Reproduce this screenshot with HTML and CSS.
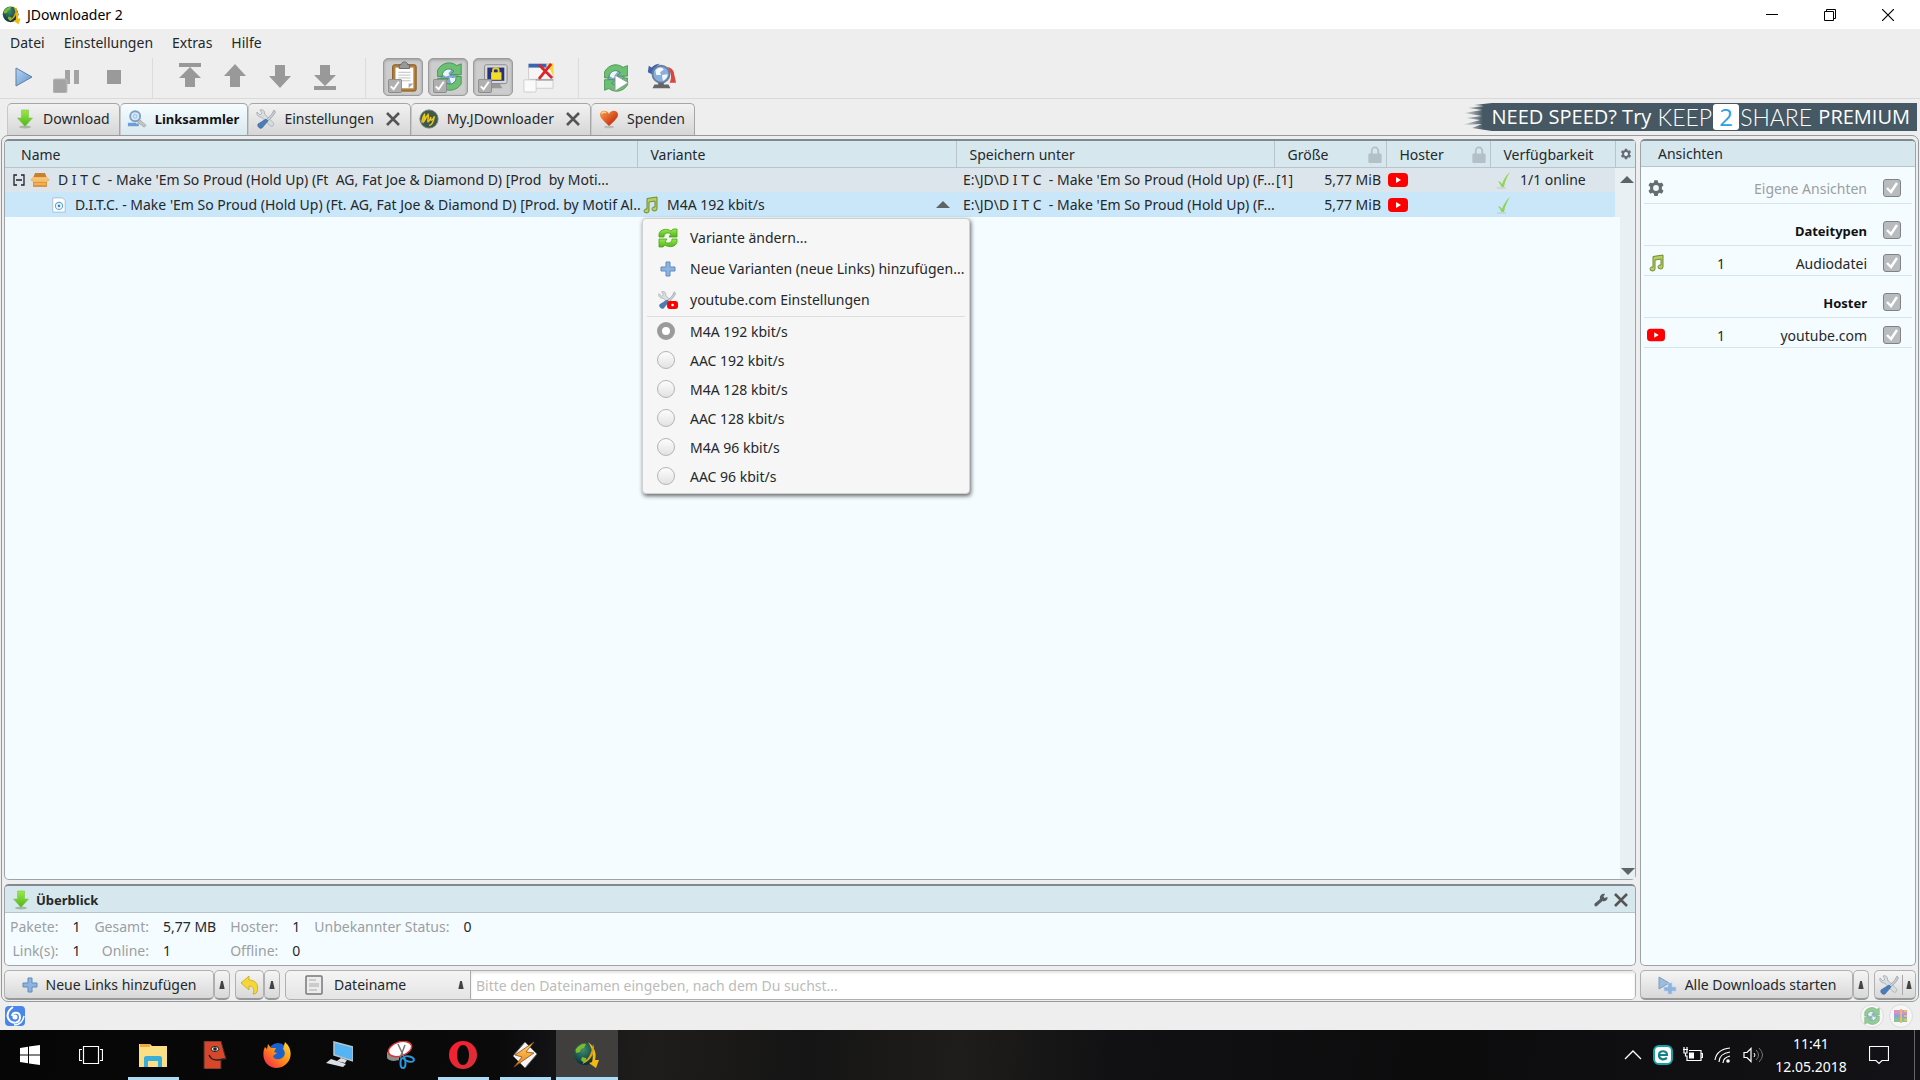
FILE: index.html
```
<!DOCTYPE html>
<html lang="de">
<head>
    <meta charset="UTF-8">
    <meta name="viewport" content="width=device-width, initial-scale=1.0">
    <title>JDownloader 2</title>
    <link rel="stylesheet" href="styles.css">
</head>
<body>
    <svg class="sprite" aria-hidden="true">
        <defs>
            <linearGradient id="gGreen" x1="0" y1="0" x2="0" y2="1"><stop offset="0" stop-color="#9be84a"/><stop offset="1" stop-color="#4fb51c"/></linearGradient>
            <linearGradient id="gBlue" x1="0" y1="0" x2="1" y2="1"><stop offset="0" stop-color="#b8d4f0"/><stop offset="1" stop-color="#5e93cf"/></linearGradient>
            <linearGradient id="gHeart" x1="0" y1="0" x2="1" y2="1"><stop offset="0" stop-color="#ffa14a"/><stop offset="1" stop-color="#b81400"/></linearGradient>
            <linearGradient id="gOpera" x1="0" y1="0" x2="1" y2="1"><stop offset="0" stop-color="#ff1b2d"/><stop offset="1" stop-color="#d3323a"/></linearGradient>
            <linearGradient id="gFox" x1="1" y1="0" x2="0" y2="1"><stop offset="0" stop-color="#ffdf2e"/><stop offset="0.5" stop-color="#ff8a16"/><stop offset="1" stop-color="#f0185a"/></linearGradient>
            <radialGradient id="gGlobe" cx="0.4" cy="0.3" r="0.7"><stop offset="0" stop-color="#3d8f6e"/><stop offset="1" stop-color="#07293a"/></radialGradient>
            <linearGradient id="gBolt" x1="0" y1="0" x2="0" y2="1"><stop offset="0" stop-color="#ffd76a"/><stop offset="1" stop-color="#f07a10"/></linearGradient>
            <linearGradient id="gBrush" x1="0" y1="0" x2="1" y2="0"><stop offset="0" stop-color="#455863" stop-opacity="0"/><stop offset="0.7" stop-color="#455863"/></linearGradient>
        </defs>
        <symbol id="jd" viewBox="0 0 28 28">
            <circle cx="12" cy="13" r="11" fill="url(#gGlobe)"/>
            <path d="M3 8c3-4 7-6 10-5l-2 4-3 1-1 3-4 1c0-2-1-3 0-4zM9 16l4 1 1 3-3 2-3-3z" fill="#7dbb2c"/>
            <path d="M15 1c7 5 9 12 7 18h4l-3 8-7-5 3-1c2-7 0-14-4-20z" fill="#f2b90f"/>
            <path d="M20 3c3 6-1 17-11 20 7-5 10-12 11-20z" fill="#e0a010"/>
        </symbol>
        <symbol id="down" viewBox="0 0 20 20">
            <ellipse cx="10" cy="18" rx="6" ry="1.500" fill="#aab5aa"/>
            <path d="M6.500 1h7v8h4L10 17.500 2.500 9h4z" fill="url(#gGreen)" stroke="#7bc94a" stroke-width=".6"/>
        </symbol>
        <symbol id="linkgrab" viewBox="0 0 22 20">
            <path d="M1 14h9v4H1zM8 15h5v3H8z" fill="#6d9dd4"/>
            <path d="M13 10l8 7-2 2-8-6z" fill="#c4c4c4" stroke="#888" stroke-width=".6"/>
            <circle cx="9" cy="7" r="5.500" fill="#d6e8f8" stroke="#7e9fc4" stroke-width="2"/>
            <circle cx="9" cy="7" r="2" fill="none" stroke="#93b7dc"/>
        </symbol>
        <symbol id="tools" viewBox="0 0 20 20">
            <path d="M1 3l3 3 2-2-2-3c3-1 5 1 4.500 4l9 9c1 2-1 4-3 3l-9-9C3 8.500 0 6 1 3z" fill="#d8dde0" stroke="#9aa2a8" stroke-width=".7"/>
            <path d="M18 1l1.500 2L17 7l-5 5-1.500-1.500 5-5z" fill="#c5ccd2" stroke="#8d969e" stroke-width=".6"/>
            <path d="M10 10l2 2-6 7c-2 1-5-1-4-4z" fill="#4b7db8" stroke="#345f94" stroke-width=".6"/>
        </symbol>
        <symbol id="cross" viewBox="0 0 16 16"><path d="M2 2l12 12M14 2L2 14" stroke="#555" stroke-width="2.600"/></symbol>
        <symbol id="my" viewBox="0 0 22 22">
            <circle cx="11" cy="11" r="10" fill="#3d5a4a" stroke="#6d7a6a"/>
            <path d="M3 15C4 11 4 8 6 6c1 3-1 6-1 8 2-2 3-6 5-8 1 3-1 6 0 8 2-1 2-3 3-5-1 5 2 4 4-1-1 5-3 10-6 10" fill="none" stroke="#f0c81a" stroke-width="1.600"/>
        </symbol>
        <symbol id="heart" viewBox="0 0 20 20">
            <ellipse cx="10" cy="18" rx="5" ry="1.300" fill="#bbb"/>
            <path d="M10 17C4 11 1 9 1 5.500 1 1 8 0 10 5c2-5 9-4 9 .500C19 9 16 11 10 17z" fill="url(#gHeart)"/>
            <path d="M3 5c0-2 3-2.500 4-1" stroke="#ffd9a8" fill="none" stroke-width="1.200"/>
        </symbol>
        <symbol id="gear" viewBox="0 0 16 16">
            <path d="M6.500 1h3l.4 2 1.300.8 2-.8 1.500 2.600L13.200 7v2l1.500 1.400-1.500 2.600-2-.8-1.300.8-.4 2h-3l-.4-2-1.300-.8-2 .8L1.300 10.400 2.800 9V7L1.300 5.600 2.800 3l2 .8L6.100 3z" fill="#666d72"/>
            <circle cx="8" cy="8" r="2.600" fill="#eff7fa"/>
        </symbol>
        <symbol id="lock" viewBox="0 0 14 18"><path d="M3.500 9V5.500a3.500 4 0 0 1 7 0V9" fill="none" stroke="#b3c0c8" stroke-width="2"/><rect x="0" y="8" width="14" height="10" rx="1" fill="#b3c0c8"/></symbol>
        <symbol id="yt" viewBox="0 0 20 16"><rect x="0" y="1" width="20" height="14" rx="4" fill="#f00"/><path d="M8 5l5 3-5 3z" fill="#fff"/></symbol>
        <symbol id="check" viewBox="0 0 16 18"><path d="M2 10l2.500 1L6 13C7.500 9 10 4 14 1c-3 5-5 9-6 15H5.500C4.500 14 3.500 12 2 10z" fill="#8fd45c"/><path d="M1 17h9" stroke="#b9ccc0"/></symbol>
        <symbol id="note" viewBox="0 0 18 18"><path d="M6 2.500L16 1v12a2.500 2 0 1 1-2-2V5L8 6v9a2.500 2 0 1 1-2-2z" fill="#b5cf63" stroke="#738a30" stroke-width="1"/></symbol>
        <symbol id="box" viewBox="0 0 20 16"><path d="M3 6h14v9H3z" fill="#e0953a"/><path d="M3 6l2-5h10l2 5z" fill="#c8822f"/><path d="M3 5h14l3 3-3 2H3L0 8z" fill="#f4bb68"/><path d="M3 7h14M4 12h12" stroke="#f7cc8c"/></symbol>
        <symbol id="file" viewBox="0 0 16 18"><path d="M1 1h11l3 3v13H1z" fill="#fdfeff" stroke="#a9bccb"/><circle cx="8" cy="10" r="4" fill="none" stroke="#5aa5dd" stroke-width="1.300"/><circle cx="8" cy="10" r="1.500" fill="#2f86cc"/></symbol>
        <symbol id="refresh" viewBox="0 0 20 20">
            <path d="M1 9V6c1-5 8-6 12-3l2-2 4 0v8h-8l2-3C10 4 6 5 6 9z" fill="url(#gGreen)" stroke="#48a31c" stroke-width=".8"/>
            <path d="M19 11v3c-1 5-8 6-12 3l-2 2H1v-8h8l-2 3c3 2 7 1 7-3z" fill="url(#gGreen)" stroke="#48a31c" stroke-width=".8"/>
        </symbol>
        <symbol id="plus" viewBox="0 0 16 16"><path d="M6 1h4v5h5v4h-5v5H6v-5H1V6h5z" fill="#8db4e0" stroke="#5f8bbd" stroke-width="1"/></symbol>
        <symbol id="ytset" viewBox="0 0 22 20"><use href="#tools" width="20" height="20"/><rect x="10" y="11" width="12" height="9" rx="3" fill="#f00"/><circle cx="16" cy="15.500" r="1.500" fill="#fff"/></symbol>
        <symbol id="globe" viewBox="0 0 32 32">
            <circle cx="16" cy="16" r="10" fill="#7fa6d4"/>
            <path d="M9 11c3-4 7-4 9-2l-3 3 1 3-4 1-3-2zM16 17l5 1 3-3c0 4-3 8-6 9z" fill="#edf5fc"/>
            <path d="M3 16V9C8 0 18-1 24 4l5-2v12H17l4-4c-5-4-10-2-12 2-1 1-1 2-1 4z" fill="#6cbf74" stroke="#35893f" stroke-width=".8"/>
            <path d="M29 16v8c-5 8-15 9-21 4l-5 2V18h12l-4 4c5 4 10 2 12-2v-4z" fill="#6cbf74" stroke="#35893f" stroke-width=".8"/>
        </symbol>
        <symbol id="tick" viewBox="0 0 15 15"><rect x=".5" y=".5" width="14" height="14" rx="1.500" fill="#b0b0b0" stroke="#888"/><path d="M3 8l3 3 5.500-8" fill="none" stroke="#fff" stroke-width="2"/></symbol>
        <symbol id="wrench" viewBox="0 0 14 14"><path d="M1 13c-1.500-1.500 0-3 1-3.500L6 6C5 3 8 0 11 1L9.500 3.500l1 1.500L13.500 4C14 7 11 9 8.500 8L4 12c-1 1.500-2 2-3 1z" fill="#555d61"/></symbol>
        <symbol id="up" viewBox="0 0 14 7"><path d="M0 7l7-7 7 7z" fill="#5d6366"/></symbol>
        <symbol id="spin" viewBox="0 0 6 9"><path d="M0 9l2-9h2l2 9z" fill="#444"/></symbol>
    </svg>

    <header class="titlebar">
        <svg class="i20"><use href="#jd"/></svg>
        <span class="title">JDownloader 2</span>
        <button class="winbtn" aria-label="Minimieren"><svg class="i12" viewBox="0 0 12 12"><path d="M0 5.500h12" stroke="#000"/></svg></button>
        <button class="winbtn" aria-label="Wiederherstellen"><svg class="i12" viewBox="0 0 12 12"><path d="M.5 2.500h9v9h-9zM2.500 2.500v-2h9v9h-2" fill="none" stroke="#000"/></svg></button>
        <button class="winbtn" aria-label="Schließen"><svg class="i12" viewBox="0 0 12 12"><path d="M0 0l12 12M12 0L0 12" stroke="#000" stroke-width="1.200"/></svg></button>
    </header>

    <nav class="menubar">
        <button>Datei</button><button>Einstellungen</button><button>Extras</button><button>Hilfe</button>
    </nav>

    <div class="toolbar">
        <div class="group">
            <button class="tool" aria-label="Start"><svg viewBox="0 0 32 32"><path d="M8 7l16 9-16 9z" fill="url(#gBlue)" stroke="#5e7fa6"/></svg></button>
            <button class="tool" aria-label="Pause"><svg viewBox="0 0 32 32"><g fill="#a3a3a3"><path d="M12 9h5v14h-5zM21 9h5v14h-5z"/><rect x="0" y="18" width="14" height="14" rx="2" stroke="#bbb"/></g></svg></button>
            <button class="tool" aria-label="Stop"><svg viewBox="0 0 32 32"><path d="M9 9h14v14H9z" fill="#9a9a9a"/></svg></button>
        </div>
        <div class="group">
            <button class="tool" aria-label="Ganz nach oben"><svg viewBox="0 0 32 32"><path d="M5 2h22v4H5zM16 6l11 11h-6v9H11v-9H5z" fill="#999"/></svg></button>
            <button class="tool" aria-label="Nach oben"><svg viewBox="0 0 32 32"><path d="M16 3l11 12h-6v11H11V15H5z" fill="#999"/></svg></button>
            <button class="tool" aria-label="Nach unten"><svg viewBox="0 0 32 32"><path d="M16 27l11-12h-6V4H11v11H5z" fill="#999"/></svg></button>
            <button class="tool" aria-label="Ganz nach unten"><svg viewBox="0 0 32 32"><path d="M16 25l11-11h-6V4H11v10H5zM5 25h22v4H5z" fill="#999"/></svg></button>
        </div>
        <div class="group">
            <button class="tool pressed" aria-pressed="true" aria-label="Zwischenablage"><svg viewBox="0 0 34 34"><rect x="6" y="4" width="25" height="28" rx="2" fill="#b5803a" stroke="#7d5423"/><path d="M9 7h19v22H9z" fill="#fff"/><path d="M12 12h13M12 15h13M12 18h13M12 21h13" stroke="#bbb"/><path d="M23 29v-5h5z" fill="#aaa"/><path d="M13 4h2c0-4 7-4 7 0h2v4H13z" fill="#999" stroke="#666"/><use href="#tick" x="1" y="19" width="15" height="15"/></svg></button>
            <button class="tool pressed" aria-pressed="true" aria-label="Automatisch aktualisieren"><svg viewBox="0 0 34 34"><use href="#globe" x="3" y="1" width="31" height="31"/><use href="#tick" x="1" y="19" width="15" height="15"/></svg></button>
            <button class="tool pressed" aria-pressed="true" aria-label="Ruhezustand verhindern"><svg viewBox="0 0 34 34"><path d="M14 24h10l3 5H12z" fill="#999"/><rect x="8" y="4" width="24" height="20" rx="2" fill="#d8d8d8" stroke="#888"/><path d="M11 7h18v14H11z" fill="#26337c"/><path d="M17 13v-3c0-3 6-3 6 0v3" fill="none" stroke="#e8cb2d" stroke-width="2"/><path d="M15 12h11v8H15z" fill="#f3dc2a"/><use href="#tick" x="1" y="19" width="15" height="15"/></svg></button>
            <button class="tool" aria-pressed="false" aria-label="Fenster"><svg viewBox="0 0 34 34"><path d="M7 3h26v26H7z" fill="#f6f6f6" stroke="#ccc"/><path d="M7 3h19v4H7z" fill="#3766b5"/><path d="M26 3h7v12z" fill="#f7d838"/><path d="M8 20h25" stroke="#aaa" stroke-width="2"/><path d="M18 4l14 14M31 3L18 19" stroke="#d8262c" stroke-width="3"/><rect x="2" y="20" width="13" height="13" rx="1" fill="#fafafa" stroke="#ccc"/></svg></button>
        </div>
        <div class="group">
            <button class="tool" aria-label="Update"><svg viewBox="0 0 34 34"><use href="#globe" x="2" y="3" width="30" height="30"/><path d="M16 15l14 8-14 9z" fill="#fff" stroke="#999"/></svg></button>
            <button class="tool" aria-label="Neu verbinden"><svg viewBox="0 0 34 34"><path d="M3 12l1-7 3 2c3-3 6-4 9-4-5 3-7 6-7 12z" fill="#3f65a8"/><path d="M31 14l2 9h-7c3-5 2-12-3-17 5 1 8 4 8 8z" fill="#d8463e"/><circle cx="17" cy="14" r="9" fill="#8aaede" stroke="#6a7f9c" stroke-width="2"/><path d="M11 10c3-4 7-4 9-1l-4 3 1 3-5 0zM18 15l6-1c0 4-3 6-5 7z" fill="#f2f8ff"/><path d="M10 25h15l2 4H8zM14 23h6v2h-6z" fill="#666"/></svg></button>
        </div>
    </div>

    <div class="tabstrip">
        <div class="tab"><button><svg class="i20"><use href="#down"/></svg>Download</button></div>
        <div class="tab active"><button><svg class="i20"><use href="#linkgrab"/></svg>Linksammler</button></div>
        <div class="tab"><button><svg class="i20"><use href="#tools"/></svg>Einstellungen</button><button class="close" aria-label="Schließen"><svg class="i16"><use href="#cross"/></svg></button></div>
        <div class="tab"><button><svg class="i20"><use href="#my"/></svg>My.JDownloader</button><button class="close" aria-label="Schließen"><svg class="i16"><use href="#cross"/></svg></button></div>
        <div class="tab"><button><svg class="i20"><use href="#heart"/></svg>Spenden</button></div>
        <a class="banner" href="#">
            <svg class="brush" viewBox="0 0 30 28" preserveAspectRatio="none"><path d="M30 0L12 2l10 1L6 5l14 2L2 10l18 3-16 2 14 2L0 22l20-1-10 4 20 3z" fill="url(#gBrush)"/></svg>
            <span class="banner-text">NEED SPEED? Try <span class="k2s">KEEP</span><b>2</b><span class="k2s">SHARE</span> PREMIUM</span>
        </a>
    </div>

    <main class="frame">
        <div class="left">
            <section class="panel list">
                <table>
                    <colgroup><col><col class="c-var"><col class="c-path"><col class="c-size"><col class="c-host"><col class="c-avail"><col class="c-gear"></colgroup>
                    <thead>
                        <tr>
                            <th>Name</th>
                            <th>Variante</th>
                            <th>Speichern unter</th>
                            <th><div class="th">Größe<svg class="lock"><use href="#lock"/></svg></div></th>
                            <th><div class="th">Hoster<svg class="lock"><use href="#lock"/></svg></div></th>
                            <th>Verfügbarkeit</th>
                            <th><button aria-label="Spalten"><svg class="i12"><use href="#gear"/></svg></button></th>
                        </tr>
                    </thead>
                    <tbody>
                        <tr class="package">
                            <td><div class="cell name"><svg class="i12" viewBox="0 0 12 12"><path d="M4 1H1v10h3M8 1h3v10H8M3 6h6" fill="none" stroke="#222" stroke-width="1.300"/></svg><svg class="i20"><use href="#box"/></svg><span>D I T C  - Make 'Em So Proud (Hold Up) (Ft  AG, Fat Joe &amp; Diamond D) [Prod  by Moti...</span></div></td>
                            <td></td>
                            <td><div class="cell path">E:\JD\D I T C  - Make 'Em So Proud (Hold Up) (F...</div></td>
                            <td><div class="cell size"><span>[1]</span><span>5,77 MiB</span></div></td>
                            <td><div class="cell host"><svg class="i20"><use href="#yt"/></svg></div></td>
                            <td><div class="cell avail"><svg class="i18"><use href="#check"/></svg>1/1 online</div></td>
                            <td class="track"><svg class="arrow"><use href="#up"/></svg></td>
                        </tr>
                        <tr class="link">
                            <td><div class="cell name child"><svg class="i16"><use href="#file"/></svg><span>D.I.T.C. - Make 'Em So Proud (Hold Up) (Ft. AG, Fat Joe &amp; Diamond D) [Prod. by Motif Al..</span></div></td>
                            <td>
                                <div class="cell variant"><svg class="i18"><use href="#note"/></svg><span class="grow">M4A 192 kbit/s</span><svg class="arrow"><use href="#up"/></svg></div>
                                <div class="anchor">
                                    <div class="popup">
                                        <button><svg class="i20"><use href="#refresh"/></svg>Variante ändern...</button>
                                        <button><svg class="i20 small"><use href="#plus"/></svg>Neue Varianten (neue Links) hinzufügen...</button>
                                        <button><svg class="i20"><use href="#ytset"/></svg>youtube.com Einstellungen</button>
                                        <hr>
                                        <label><input type="radio" name="variant" checked>M4A 192 kbit/s</label>
                                        <label><input type="radio" name="variant">AAC 192 kbit/s</label>
                                        <label><input type="radio" name="variant">M4A 128 kbit/s</label>
                                        <label><input type="radio" name="variant">AAC 128 kbit/s</label>
                                        <label><input type="radio" name="variant">M4A 96 kbit/s</label>
                                        <label><input type="radio" name="variant">AAC 96 kbit/s</label>
                                    </div>
                                </div>
                            </td>
                            <td><div class="cell path">E:\JD\D I T C  - Make 'Em So Proud (Hold Up) (F...</div></td>
                            <td><div class="cell size"><span></span><span>5,77 MiB</span></div></td>
                            <td><div class="cell host"><svg class="i20"><use href="#yt"/></svg></div></td>
                            <td><div class="cell avail"><svg class="i18"><use href="#check"/></svg></div></td>
                            <td class="track"></td>
                        </tr>
                    </tbody>
                </table>
                <div class="scroll"><svg class="arrow flip"><use href="#up"/></svg></div>
            </section>

            <section class="panel overview">
                <div class="panel-head"><svg class="i20"><use href="#down"/></svg><h2>Überblick</h2>
                    <button aria-label="Einstellungen"><svg class="i14"><use href="#wrench"/></svg></button>
                    <button aria-label="Schließen"><svg class="i16"><use href="#cross"/></svg></button>
                </div>
                <dl class="stats">
                    <dt>Pakete:</dt><dd>1</dd><dt>Gesamt:</dt><dd>5,77 MB</dd><dt>Hoster:</dt><dd>1</dd><dt>Unbekannter Status:</dt><dd>0</dd>
                    <dt>Link(s):</dt><dd>1</dd><dt>Online:</dt><dd>1</dd><dt>Offline:</dt><dd>0</dd>
                </dl>
            </section>

            <div class="actions">
                <button class="btn add"><svg class="i16"><use href="#plus"/></svg>Neue Links hinzufügen</button>
                <button class="btn drop" aria-label="Mehr"><svg class="spin"><use href="#spin"/></svg></button>
                <button class="btn undo" aria-label="Rückgängig"><svg class="i20" viewBox="0 0 20 20"><path d="M1 8l8-7v4c7 0 10 5 8 12-1 2-3 2-4 2 2-5 0-8-4-8v4z" fill="#f5d838" stroke="#c9a520" stroke-width=".8"/></svg></button>
                <button class="btn drop" aria-label="Mehr"><svg class="spin"><use href="#spin"/></svg></button>
                <div class="search">
                    <svg class="sheet" viewBox="0 0 18 20"><rect x="1" y="1" width="16" height="18" rx="1" fill="#ececec" stroke="#777" stroke-width="1.500"/><path d="M4 5h7M4 9h10M4 11h10M4 15h8" stroke="#aaa"/></svg>
                    <select aria-label="Suchfeld"><option>Dateiname</option></select>
                    <svg class="spin"><use href="#spin"/></svg>
                    <input type="text" aria-label="Dateiname suchen" placeholder="Bitte den Dateinamen eingeben, nach dem Du suchst...">
                </div>
            </div>
        </div>

        <div class="right">
            <section class="panel views">
                <div class="panel-head"><h3>Ansichten</h3></div>
                <label class="view custom"><svg><use href="#gear"/></svg><span class="label">Eigene Ansichten</span><input type="checkbox" checked></label>
                <label class="view heading"><span class="label">Dateitypen</span><input type="checkbox" checked></label>
                <label class="view"><svg><use href="#note"/></svg><span class="count">1</span><span class="label">Audiodatei</span><input type="checkbox" checked></label>
                <label class="view heading"><span class="label">Hoster</span><input type="checkbox" checked></label>
                <label class="view"><svg><use href="#yt"/></svg><span class="count">1</span><span class="label">youtube.com</span><input type="checkbox" checked></label>
            </section>
            <div class="actions">
                <button class="btn startall"><svg class="i20" viewBox="0 0 20 20"><path d="M2 2l10 6-10 6z" fill="#9dbcdc" stroke="#7d9cc0"/><path d="M11 8h4v4h4v4h-4v3h-4v-3H7v-4h4z" fill="#8db4e0" stroke="#b9d0ea" stroke-width=".6"/></svg>Alle Downloads starten</button>
                <button class="btn drop" aria-label="Mehr"><svg class="spin"><use href="#spin"/></svg></button>
                <button class="btn settings" aria-label="Einstellungen"><svg class="i20"><use href="#tools"/></svg><i></i><svg class="spin"><use href="#spin"/></svg></button>
            </div>
        </div>
    </main>

    <footer class="statusbar">
        <svg class="i20" viewBox="0 0 20 20"><rect width="20" height="20" rx="4" fill="#4a86e8"/><path d="M8 1C2 5 1 11 5 15c4 3 10 2 10-4 0-5-7-6-8-1" fill="none" stroke="#fff" stroke-width="2"/><circle cx="10" cy="11" r="2.500" fill="#fff"/><path d="M9 19c6 0 9-4 10-9" fill="none" stroke="#fff" stroke-width="1.500"/></svg>
        <span class="grow"></span>
        <span class="badge"><svg class="i18"><use href="#globe"/></svg></span>
        <span class="badge"><svg class="i16" viewBox="0 0 16 16"><path d="M1 2h13v4H1z" fill="#d46ab0"/><path d="M1 6h13v4H1z" fill="#6a83cc"/><path d="M1 10h13v4H1z" fill="#61b26a"/><path d="M8 1v14M11 3h3M11 8h3M11 12h3" stroke="#e0a848" stroke-width="2"/></svg></span>
    </footer>

    <div class="taskbar">
        <button class="task" aria-label="Start"><svg class="i20" viewBox="0 0 20 20"><path d="M0 3l8-1.200v7.700H0zM9 1.600L20 0v9.500H9zM0 10.500h8v7.700L0 17zM9 10.500h11V20L9 18.400z" fill="#fff"/></svg></button>
        <button class="task" aria-label="Taskansicht"><svg class="i24" viewBox="0 0 24 20"><path d="M4.500 1.500h15v17h-15zM3 4.500H.5v11H3M21 4.500h2.500v11H21" fill="none" stroke="#fff" stroke-width="1.200"/></svg></button>
        <button class="task open" aria-label="Explorer"><svg class="i28" viewBox="0 0 28 28"><path d="M0 3h11l2 2h15v21H0z" fill="#fbdf84"/><path d="M1 3h10v3H1z" fill="#f3a93a"/><path d="M5 26V17c0-1 1-2 2-2h14c1 0 2 1 2 2v9h-4v-6H9v6z" fill="#3aaedb"/></svg></button>
        <button class="task" aria-label="Player"><svg class="i28" viewBox="0 0 28 28"><path d="M3 0h17l5 18h-5v10H3z" fill="#d9472b" stroke="#38302e"/><ellipse cx="14" cy="8" rx="4" ry="2.500" fill="#ddd" stroke="#222"/><circle cx="14" cy="8" r="1.800" fill="#222"/><path d="M8 14c2 5 6 6 16 4" fill="none" stroke="#222" stroke-width="1.400"/></svg></button>
        <button class="task" aria-label="Firefox"><svg class="i28" viewBox="0 0 28 28"><circle cx="15" cy="12" r="10" fill="#1b62d1"/><path d="M22 1c8 7 6 16 3 20-5 7-15 8-21 2C-1 18 0 9 2 6l2 2 1-5 3 4 5 0-2 4 3 1-4 3c1 4 6 4 9 2 4-3 3-7 1-9z" fill="url(#gFox)"/></svg></button>
        <button class="task" aria-label="Computer"><svg class="i28" viewBox="0 0 28 28"><path d="M9 1l19 5v14L9 14z" fill="#55b4f3" stroke="#b8c5cd" stroke-width="1.500"/><path d="M16 17l6 2-2 3-8-2zM6 18l15 5-3 3L1 22z" fill="#d9dfe3"/></svg></button>
        <button class="task" aria-label="Snipping Tool"><svg class="i28" viewBox="0 0 28 28"><path d="M0 11v6c3 4 9 3 12 2v-6z" fill="#8d8d8d"/><ellipse cx="13" cy="8" rx="12" ry="7" transform="rotate(-18 13 8)" fill="#fff" stroke="#d33" stroke-width="1.500"/><path d="M11 3l6 13M18 4L13 17" stroke="#777" stroke-width="1.500"/><ellipse cx="16" cy="22" rx="2.500" ry="5" fill="none" stroke="#2d97dc" stroke-width="2"/><ellipse cx="22" cy="18" rx="5" ry="2.500" transform="rotate(15 22 18)" fill="none" stroke="#2d97dc" stroke-width="2"/></svg></button>
        <button class="task open" aria-label="Opera"><svg class="i28" viewBox="0 0 28 28"><path fill-rule="evenodd" d="M14 0a14 14 0 1 0 0 28 14 14 0 1 0 0-28zM14 4c4 0 6 5 6 10s-2 10-6 10-6-5-6-10 2-10 6-10z" fill="url(#gOpera)"/></svg></button>
        <button class="task open" aria-label="Winamp"><svg class="i28" viewBox="0 0 28 28"><path d="M14 1l12 12-12 14L2 15z" fill="#f4f4f4" stroke="#666"/><path d="M23 1L4 14l7 2-8 10 20-14-8-1z" fill="url(#gBolt)" stroke="#87501a" stroke-width=".8"/></svg></button>
        <button class="task open current" aria-label="JDownloader"><svg class="i28"><use href="#jd"/></svg></button>
        <span class="grow"></span>
        <div class="tray">
            <svg class="i20" viewBox="0 0 20 20"><path d="M2 14l8-8 8 8" fill="none" stroke="#fff" stroke-width="1.300"/></svg>
            <svg class="i20" viewBox="0 0 20 20"><rect x="1" y="1" width="18" height="18" rx="5" fill="#fff" stroke="#18a0a8" stroke-width="2"/><path d="M6 10h8c0-5-8-5-8 0 0 5 5 5 8 3" fill="none" stroke="#127f89" stroke-width="2.200"/></svg>
            <svg class="i20" viewBox="0 0 20 20"><path d="M6 5.500h12v10H4v-5M18 8.500h1.500v4H18M0 4.500h5M1 2v2M4 2v2M1 5v3h3V5M2.500 8v3H4" fill="none" stroke="#fff" stroke-width="1.200"/><path d="M6 7.500h5v6H6z" fill="#fff"/></svg>
            <svg class="i20" viewBox="0 0 20 20"><g fill="none" stroke="#fff" stroke-width="1.200"><path d="M2 15C3 8 8 4 17 3M6 17c0-5 4-9 11-10M10 18c0-4 3-6 7-7"/></g><circle cx="15" cy="16" r="1.800" fill="#fff"/></svg>
            <svg class="i20" viewBox="0 0 20 20"><path d="M1 7.500h3l4-4v13l-4-4H1z" fill="none" stroke="#fff" stroke-width="1.200"/><path d="M11 8q2 2 0 4" fill="none" stroke="#fff"/><path d="M13 5q5 5 0 10M16 3q7 7 0 14" fill="none" stroke="#777"/></svg>
        </div>
        <time class="clock" datetime="2018-05-12T11:41"><span>11:41</span><span>12.05.2018</span></time>
        <button class="notify" aria-label="Info-Center"><svg class="i20" viewBox="0 0 20 20"><path d="M.5 1.500h19v14H13l-3 3-3-3H.5z" fill="none" stroke="#fff" stroke-width="1.200"/></svg></button>
        <span class="desktop"></span>
    </div>
</body>
</html>
```
FILE: styles.css
```
* {
    box-sizing: border-box;
}
body {
    margin: 0;
    height: 100vh;
    display: flex;
    flex-direction: column;
    overflow: hidden;
    background: #eeeeee;
    color: #24282b;
    font-family: "Noto Sans", "Open Sans", sans-serif;
    font-size: 14px;
    line-height: 20px;
}
button, input, select {
    font: inherit;
    color: inherit;
}
button {
    background: none;
    border: 0;
    padding: 0;
    white-space: nowrap;
}
svg {
    display: block;
    flex-shrink: 0;
}
.sprite {
    position: absolute;
    width: 0;
    height: 0;
}
.i12 { width: 12px; height: 12px; }
.i14 { width: 14px; height: 14px; }
.i16 { width: 16px; height: 16px; }
.i18 { width: 18px; height: 18px; }
.i20 { width: 20px; height: 20px; }
.i24 { width: 24px; height: 20px; }
.i28 { width: 28px; height: 28px; }
.arrow { width: 14px; height: 7px; }
.flip { transform: rotate(180deg); }
.spin { width: 6px; height: 8px; }
.grow { flex: 1; }

/* window chrome */
.titlebar {
    height: 29px;
    display: flex;
    align-items: center;
    padding: 0 3px 0 2px;
    background: #fff;
    color: #000;
}
.title {
    flex: 1;
    padding-left: 5px;
}
.winbtn {
    width: 58px;
    height: 29px;
    display: flex;
    align-items: center;
    justify-content: center;
}
.menubar {
    height: 28px;
    display: flex;
    align-items: center;
    gap: 19px;
    padding-left: 10px;
}
.toolbar {
    height: 42px;
    display: flex;
    padding-top: 1px;
    border-bottom: 1px solid #d9d9d9;
}
.group {
    display: flex;
    gap: 5px;
    width: 213px;
    padding-left: 17px;
    border-right: 1px solid #dcdcdc;
}
.group:first-child {
    width: 153px;
    padding-left: 4px;
}
.group:last-child {
    border-right: 0;
}
.tool {
    width: 40px;
    height: 38px;
    display: flex;
    align-items: center;
    justify-content: center;
    border-radius: 5px;
}
.tool svg {
    width: 32px;
    height: 32px;
}
.pressed {
    background: #cdcdcd;
    border: 1px solid #9b9b9b;
    box-shadow: inset 0 1px 3px #999;
}

.tabstrip {
    height: 36px;
    display: flex;
    align-items: flex-start;
    padding: 4px 3px 0 7px;
}
.tab {
    height: 32px;
    display: flex;
    align-items: center;
    padding: 0 9px 2px 7px;
    border: 1px solid #a6a6a6;
    border-bottom: 0;
    border-left-color: #c8c8c8;
    border-radius: 5px 5px 0 0;
    background: linear-gradient(#f2f2f2, #d6d6d6);
}
.tab button {
    display: flex;
    align-items: center;
    gap: 8px;
}
.tab .close {
    padding-left: 11px;
}
.tab.active {
    padding: 0 8px 2px 6px;
    background: linear-gradient(#f6fdff, #d9e8ef);
}
.tab.active button {
    font-weight: bold;
    font-size: 13px;
    color: #111;
}
.banner {
    margin-left: auto;
    height: 28px;
    display: flex;
    color: #fff;
    text-decoration: none;
}
.brush {
    width: 30px;
    height: 28px;
}
.banner-text {
    display: flex;
    align-items: center;
    gap: 1px;
    padding-right: 7px;
    background: #455863;
    font-family: "Open Sans", sans-serif;
    font-size: 20px;
    white-space: pre;
}
.banner b {
    width: 26px;
    height: 26px;
    line-height: 26px;
    text-align: center;
    background: #fff;
    color: #2aa0e6;
    border-radius: 3px;
    font-weight: normal;
    font-size: 24px;
}
.k2s {
    font-family: Lato, sans-serif;
    font-size: 23px;
    font-weight: 300;
}

/* main frame */
.frame {
    flex: 1;
    min-height: 0;
    display: flex;
    gap: 4px;
    padding: 3px 2px 1px;
    margin: 0 1px;
    border: 1px solid #949a9d;
    border-radius: 7px;
}
.left, .right {
    display: flex;
    flex-direction: column;
    gap: 4px;
}
.left {
    flex: 1;
    min-width: 0;
}
.right {
    width: 276px;
}
.panel {
    border: 1px solid #9ca4a8;
    border-top: 2px solid #7f898f;
    border-radius: 5px;
    background: #f5fcff;
}
.list, .views {
    flex: 1;
}
.list {
    display: flex;
    flex-direction: column;
}
table {
    width: 100%;
    table-layout: fixed;
    border-collapse: collapse;
}
.c-var { width: 319px; }
.c-path { width: 318px; }
.c-size { width: 112px; }
.c-host { width: 104px; }
.c-avail { width: 125px; }
.c-gear { width: 20px; }
th {
    height: 26px;
    padding: 2px 0 0 13px;
    text-align: left;
    font-weight: normal;
    background: #d7e7ee;
    border-right: 1px solid #b7c4ca;
    border-bottom: 1px solid #b7c4ca;
}
th:first-child {
    padding-left: 16px;
    border-top-left-radius: 4px;
}
th:last-child {
    padding: 2px 3px 0 4px;
    border-right: 0;
}
.th {
    display: flex;
    align-items: center;
    justify-content: space-between;
    padding-right: 4px;
}
.lock { width: 14px; height: 17px; }
td {
    height: 25px;
    padding: 0;
}
.cell {
    display: flex;
    align-items: center;
    white-space: pre;
}
.package td {
    background: #dde5ec;
}
.link td {
    background: #cae6f9;
}
td.track {
    background: #e9f0f3;
    padding-left: 5px;
}
.cell.name {
    padding-left: 8px;
    gap: 5px;
}
.cell.name span {
    padding-left: 3px;
}
.cell.child {
    padding-left: 46px;
}
.path {
    padding-left: 7px;
}
.size {
    justify-content: space-between;
    padding: 0 5px 0 2px;
}
.host {
    padding-left: 2px;
}
.avail {
    gap: 7px;
    padding-left: 5px;
}
.variant {
    gap: 8px;
    padding: 0 6px 0 4px;
}
.scroll {
    flex: 1;
    display: flex;
    align-items: flex-end;
    align-self: flex-end;
    padding: 0 0 4px 1px;
    width: 15px;
    background: #e9f0f3;
}

.anchor {
    position: relative;
    height: 0;
}
.popup {
    position: absolute;
    top: 3px;
    left: 5px;
    z-index: 2;
    min-width: 328px;
    padding: 4px 4px 1px;
    background: #f6f6f6;
    border: 1px solid #d0d0d0;
    border-radius: 4px;
    box-shadow: 1px 2px 4px rgba(0, 0, 0, 0.6);
}
.popup button, .popup label {
    width: 100%;
    display: flex;
    align-items: center;
    gap: 12px;
    white-space: nowrap;
}
.popup button {
    height: 31px;
    padding-left: 11px;
}
.popup label {
    height: 29px;
    padding-left: 10px;
}
.popup .small {
    padding: 2px;
}
.popup hr {
    margin: 0 0 1px;
    border: 0;
    border-top: 1px solid #dddddd;
}
input[type="radio"] {
    appearance: none;
    width: 18px;
    height: 18px;
    margin: 0 3px 3px 0;
    border: 1px solid #b5b5b5;
    border-radius: 50%;
    background: linear-gradient(#fdfdfd, #e2e2e2);
}
input[type="radio"]:checked {
    border: 5px solid #9b9b9b;
    background: #fff;
}

.panel-head {
    height: 27px;
    display: flex;
    align-items: center;
    padding: 2px 6px 0;
    background: #d7e7ee;
    border-bottom: 1px solid #b7c4ca;
    border-radius: 4px 4px 0 0;
}
.views .panel-head {
    height: 26px;
    padding-top: 1px;
}
.panel-head h2 {
    flex: 1;
    margin: 0 0 0 5px;
    font-size: 13px;
}
.panel-head h3 {
    margin: 0 0 0 11px;
    font-size: 14px;
    font-weight: normal;
}
.panel-head button {
    margin-left: 5px;
}
.overview {
    height: 82px;
}
.stats {
    display: grid;
    grid-template-columns: repeat(7, auto) 1fr;
    grid-auto-rows: 24px;
    column-gap: 14px;
    align-items: center;
    margin: 0;
    padding: 2px 5px;
    white-space: nowrap;
}
.stats dt {
    color: #9b9fa2;
    text-align: right;
}
.stats dd {
    margin: 0;
}

.actions {
    height: 30px;
    display: flex;
}
.btn {
    display: flex;
    align-items: center;
    justify-content: center;
    gap: 8px;
    padding-top: 1px;
    border: 1px solid #b0b0b0;
    border-bottom: 2px solid #999;
    border-radius: 5px;
    background: linear-gradient(#f5f5f5, #d8d8d8);
}
.btn.add { width: 210px; }
.btn.drop { width: 16px; margin-right: 5px; }
.btn.undo { width: 29px; }
.btn.startall { flex: 1; }
.btn.settings { width: 42px; gap: 3px; }
.settings i {
    height: 20px;
    border-left: 1px solid #aaa;
}
.search {
    flex: 1;
    display: flex;
    align-items: center;
    border: 1px solid #b0b0b0;
    border-radius: 5px;
    overflow: hidden;
    background: linear-gradient(#f5f5f5, #e4e4e4);
}
.sheet {
    width: 18px;
    height: 20px;
    margin-left: 19px;
}
.search select {
    appearance: none;
    width: 124px;
    margin-left: 11px;
    padding: 0;
    border: 0;
    background: none;
}
.search .spin {
    margin-right: 6px;
}
.search input {
    flex: 1;
    height: 28px;
    padding: 0 5px;
    border: 0;
    border-left: 1px solid #aaa;
    background: #fff;
    box-shadow: inset 0 2px 3px #e4e4e4;
}
.search input::placeholder {
    color: #bbbbbb;
}

.view {
    height: 30px;
    display: flex;
    align-items: flex-end;
    margin: 0 3px;
    padding: 0 11px 1px 3px;
    border-bottom: 1px solid #d5e5f0;
}
.view.custom {
    height: 37px;
    padding-bottom: 4px;
    color: #9b9fa2;
}
.view.heading {
    height: 42px;
    padding-bottom: 4px;
    font-size: 13px;
    font-weight: bold;
    color: #111;
}
.view .label {
    flex: 1;
    text-align: right;
}
.view svg {
    width: 18px;
    height: 18px;
    margin-bottom: 2px;
}
.count {
    width: 60px;
    text-align: right;
}
input[type="checkbox"] {
    appearance: none;
    width: 18px;
    height: 18px;
    margin: 0 0 2px 16px;
    border: 1px solid #7f8386;
    border-radius: 3px;
    background: #b9bcbe url("data:image/svg+xml,%3Csvg xmlns='http://www.w3.org/2000/svg' viewBox='0 0 16 16'%3E%3Cpath d='M3 8l4 4 6-9' fill='none' stroke='white' stroke-width='2.400'/%3E%3C/svg%3E") center / 16px 16px;
}

.statusbar {
    height: 28px;
    display: flex;
    align-items: center;
    gap: 13px;
    padding: 0 7px 0 5px;
}
.badge {
    width: 24px;
    height: 24px;
    margin-left: -8px;
    display: flex;
    align-items: center;
    justify-content: center;
    border: 1px solid #d5d5d5;
    border-radius: 50%;
    background: #fafafa;
    opacity: 0.7;
}

/* desktop taskbar */
.taskbar {
    height: 50px;
    display: flex;
    align-items: center;
    background: linear-gradient(95deg, #060606, #0a0a0b 26%, #17171a 30%, #1f1d1b 34%, #151515 42%, #1f1d1b 50%, #111113 58%, #0c0c0d 75%, #131317);
    color: #fff;
}
.task {
    width: 62px;
    height: 50px;
    display: flex;
    align-items: center;
    justify-content: center;
}
.task:first-child {
    width: 60px;
}
.open {
    background: linear-gradient(#a9dcf7, #a9dcf7) center bottom / 51px 3px no-repeat;
}
.current {
    background-size: 100% 3px;
    background-color: #403f3e;
}
.tray {
    display: flex;
    align-items: center;
    gap: 10px;
}
.clock {
    width: 96px;
    display: flex;
    flex-direction: column;
    align-items: center;
    line-height: 23px;
}
.notify {
    width: 40px;
    display: flex;
    justify-content: center;
}
.desktop {
    width: 6px;
    height: 50px;
    margin-left: 15px;
    border-left: 1px solid #666;
}
```
